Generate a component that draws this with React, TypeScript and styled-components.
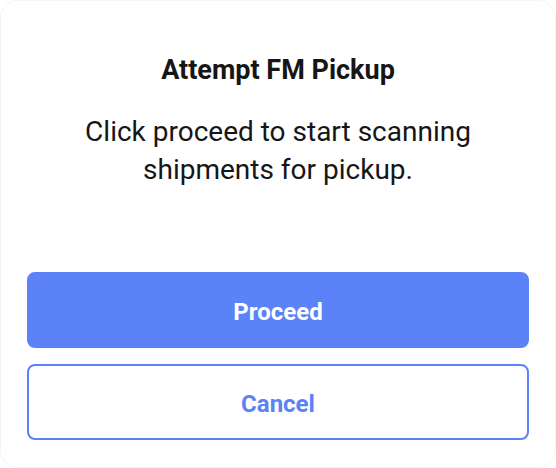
import React from "react";
import styled, { createGlobalStyle } from "styled-components";

const GlobalStyle = createGlobalStyle`
  html, body {
    margin: 0;
    padding: 0;
    background: #ffffff;
  }

  * {
    box-sizing: border-box;
  }
`;

const StyledDialog = styled.div`
  width: 556px;
  height: 468px;
  display: flex;
  flex-direction: column;
  align-items: stretch;
  padding: 53px 26px 27px;
  background: #ffffff;
  border: 1px solid #f5f5f8;
  border-radius: 18px;
  font-family: "Roboto", "Liberation Sans", sans-serif;
  color: #161616;
`;

const Title = styled.h2`
  margin: 0;
  font-size: 27px;
  font-weight: 700;
  line-height: 32px;
  text-align: center;
`;

const Message = styled.p`
  margin: 27px 0 0;
  font-size: 28px;
  font-weight: 400;
  line-height: 38px;
  text-align: center;
  padding: 0 30px;
`;

const Actions = styled.div`
  margin-top: auto;
  display: flex;
  flex-direction: column;
  gap: 16px;
`;

const Button = styled.button<{ $variant: "primary" | "outline" }>`
  height: 76px;
  width: 100%;
  padding: 3px 0 0;
  border-radius: 8px;
  font-family: inherit;
  font-size: 24px;
  font-weight: 700;
  cursor: pointer;
  border: 2px solid #5c82f8;
  background: ${({ $variant }) => ($variant === "primary" ? "#5c82f8" : "#ffffff")};
  color: ${({ $variant }) => ($variant === "primary" ? "#ffffff" : "#5c82f8")};
`;

const App: React.FC = () => {
  return (
    <>
      <GlobalStyle />
      <StyledDialog>
        <Title>Attempt FM Pickup</Title>
        <Message>Click proceed to start scanning shipments for pickup.</Message>
        <Actions>
          <Button $variant="primary">Proceed</Button>
          <Button $variant="outline">Cancel</Button>
        </Actions>
      </StyledDialog>
    </>
  );
};

export default App;
